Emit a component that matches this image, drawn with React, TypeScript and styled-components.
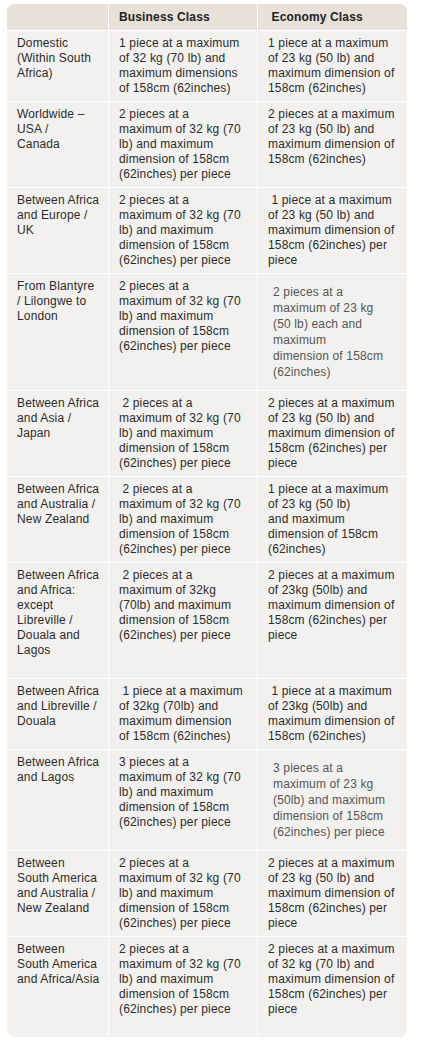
import styled, { createGlobalStyle } from "styled-components";

const GlobalStyle = createGlobalStyle`
  html, body {
    margin: 0;
    padding: 0;
    background: #ffffff;
  }
  body {
    font-family: "Liberation Sans", Arial, sans-serif;
  }
`;

const Page = styled.div`
  padding: 4px 0 14px 7px;
`;

const Frame = styled.div`
  width: 400px;
  border-radius: 8px;
  overflow: hidden;
  background: #f3f1ef;
`;

const Table = styled.table`
  width: 400px;
  table-layout: fixed;
  border-collapse: separate;
  border-spacing: 0;
  font-size: 12px;
  line-height: 15px;
  letter-spacing: 0.15px;
  color: #2b2b2b;
`;

const HeadRow = styled.tr`
  background: #e7e1da;
`;

const HeadCell = styled.th`
  height: 25px;
  padding: 1px 10px 0 10px;
  text-align: left;
  font-weight: bold;
  font-size: 12px;
  color: #222222;
  vertical-align: middle;
  & + & {
    border-left: 1px solid #ffffff;
  }
`;

const Row = styled.tr`
  background: #f3f1ef;
`;

const Cell = styled.td<{ $soft?: boolean }>`
  vertical-align: top;
  border-top: 1px solid #ffffff;
  padding: ${(p) => (p.$soft ? "10px 10px 10px 15px" : "5px 10px 5px 10px")};
  line-height: ${(p) => (p.$soft ? "16px" : "15px")};
  color: ${(p) => (p.$soft ? "#555555" : "#2b2b2b")};
  white-space: nowrap;
  & + & {
    border-left: 1px solid #ffffff;
  }
`;

type CellData = { lines: string[]; soft?: boolean };
type RowData = [CellData, CellData, CellData];

const c = (lines: string[], soft = false): CellData => ({ lines, soft });
const nb = "\u00a0";

const rows: RowData[] = [
  [
    c(["Domestic", "(Within South", "Africa)"]),
    c(["1 piece at a maximum", "of 32 kg (70 lb) and", "maximum dimensions", "of 158cm (62inches)"]),
    c(["1 piece at a maximum", "of 23 kg (50 lb) and", "maximum dimension of", "158cm (62inches)"]),
  ],
  [
    c(["Worldwide –", "USA /", "Canada"]),
    c(["2 pieces at a", "maximum of 32 kg (70", "lb) and maximum", "dimension of 158cm", "(62inches) per piece"]),
    c(["2 pieces at a maximum", "of 23 kg (50 lb) and", "maximum dimension of", "158cm (62inches)"]),
  ],
  [
    c(["Between Africa", "and Europe /", "UK"]),
    c(["2 pieces at a", "maximum of 32 kg (70", "lb) and maximum", "dimension of 158cm", "(62inches) per piece"]),
    c([nb + "1 piece at a maximum", "of 23 kg (50 lb) and", "maximum dimension of", "158cm (62inches) per", "piece"]),
  ],
  [
    c(["From Blantyre", "/ Lilongwe to", "London"]),
    c(["2 pieces at a", "maximum of 32 kg (70", "lb) and maximum", "dimension of 158cm", "(62inches) per piece"]),
    c(["2 pieces at a", "maximum of 23 kg", "(50 lb) each and", "maximum", "dimension of 158cm", "(62inches)"], true),
  ],
  [
    c(["Between Africa", "and Asia /", "Japan"]),
    c([nb + "2 pieces at a", "maximum of 32 kg (70", "lb) and maximum", "dimension of 158cm", "(62inches) per piece"]),
    c(["2 pieces at a maximum", "of 23 kg (50 lb) and", "maximum dimension of", "158cm (62inches) per", "piece"]),
  ],
  [
    c(["Between Africa", "and Australia /", "New Zealand"]),
    c([nb + "2 pieces at a", "maximum of 32 kg (70", "lb) and maximum", "dimension of 158cm", "(62inches) per piece"]),
    c(["1 piece at a maximum", "of 23 kg (50 lb)", "and maximum", "dimension of 158cm", "(62inches)"]),
  ],
  [
    c(["Between Africa", "and Africa:", "except", "Libreville /", "Douala and", "Lagos", nb]),
    c([nb + "2 pieces at a", "maximum of 32kg", "(70lb) and maximum", "dimension of 158cm", "(62inches) per piece"]),
    c(["2 pieces at a maximum", "of 23kg (50lb) and", "maximum dimension of", "158cm (62inches) per", "piece"]),
  ],
  [
    c(["Between Africa", "and Libreville /", "Douala"]),
    c([nb + "1 piece at a maximum", "of 32kg (70lb) and", "maximum dimension", "of 158cm (62inches)"]),
    c([nb + "1 piece at a maximum", "of 23kg (50lb) and", "maximum dimension of", "158cm (62inches)"]),
  ],
  [
    c(["Between Africa", "and Lagos"]),
    c(["3 pieces at a", "maximum of 32 kg (70", "lb) and maximum", "dimension of 158cm", "(62inches) per piece"]),
    c(["3 pieces at a", "maximum of 23 kg", "(50lb) and maximum", "dimension of 158cm", "(62inches) per piece"], true),
  ],
  [
    c(["Between", "South America", "and Australia /", "New Zealand"]),
    c(["2 pieces at a", "maximum of 32 kg (70", "lb) and maximum", "dimension of 158cm", "(62inches) per piece"]),
    c(["2 pieces at a maximum", "of 23 kg (50 lb) and", "maximum dimension of", "158cm (62inches) per", "piece"]),
  ],
  [
    c(["Between", "South America", "and Africa/Asia"]),
    c(["2 pieces at a", "maximum of 32 kg (70", "lb) and maximum", "dimension of 158cm", "(62inches) per piece", nb]),
    c(["2 pieces at a maximum", "of 32 kg (70 lb) and", "maximum dimension of", "158cm (62inches) per", "piece"]),
  ],
];

const Lines = ({ lines }: { lines: string[] }) => (
  <>
    {lines.map((line, i) => (
      <span key={i}>
        {line}
        {i < lines.length - 1 && <br />}
      </span>
    ))}
  </>
);

const App = () => {
  return (
    <Page>
      <GlobalStyle />
      <Frame>
        <Table>
          <colgroup>
            <col style={{ width: 101 }} />
            <col style={{ width: 149 }} />
            <col style={{ width: 150 }} />
          </colgroup>
          <thead>
            <HeadRow>
              <HeadCell></HeadCell>
              <HeadCell>Business Class</HeadCell>
              <HeadCell>{nb}Economy Class</HeadCell>
            </HeadRow>
          </thead>
          <tbody>
            {rows.map((row, r) => (
              <Row key={r}>
                {row.map((cell, k) => (
                  <Cell key={k} $soft={cell.soft}>
                    <Lines lines={cell.lines} />
                  </Cell>
                ))}
              </Row>
            ))}
          </tbody>
        </Table>
      </Frame>
    </Page>
  );
};

export default App;
